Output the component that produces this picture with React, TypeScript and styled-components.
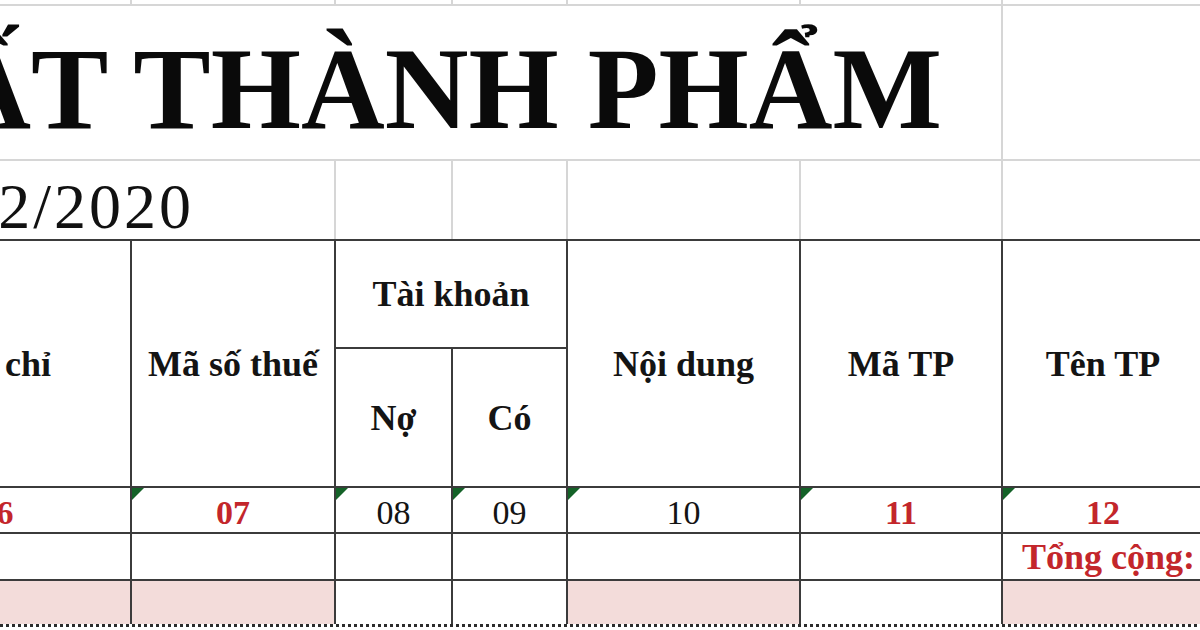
import styled, { createGlobalStyle } from "styled-components";

const GlobalStyle = createGlobalStyle`
  html, body {
    margin: 0;
    padding: 0;
    background: #fff;
  }
  body {
    font-family: "Liberation Serif", "Times New Roman", serif;
    color: #111;
  }
`;

// widths of the sheet columns A..G (A is half scrolled out of view)
const COLUMNS = "267px 202px 115px 113px 231px 200px 200px";
const RED = "#c3262b";

const Viewport = styled.div`
  width: 1200px;
  height: 630px;
  overflow: hidden;
  background: #fff;
`;

const Sheet = styled.div`
  width: 1340px;
  margin-left: -137px; /* horizontal scroll of the worksheet */
  display: flex;
  flex-direction: column;
`;

const Band = styled.div<{ $bottom?: boolean }>`
  display: grid;
  grid-template-columns: ${COLUMNS};
  column-gap: 2px;
  background: #d6d6d6;
  padding-bottom: ${(p) => (p.$bottom ? "2px" : "0")};
`;

const GridCell = styled.div<{ $h: number; $span?: number }>`
  height: ${(p) => p.$h}px;
  background: #fff;
  grid-column: ${(p) => (p.$span ? `span ${p.$span}` : "auto")};
`;

const TitleCell = styled(GridCell)`
  display: flex;
  justify-content: flex-end;
  align-items: flex-start;
  overflow: hidden;
  padding: 25px 59px 0 0;
  box-sizing: border-box;
  white-space: nowrap;
  font-size: 116px;
  font-weight: 700;
  line-height: 1;
  color: #0a0a0a;
`;

const DateCell = styled(GridCell)`
  display: flex;
  justify-content: flex-end;
  align-items: flex-start;
  overflow: hidden;
  padding: 14px 140px 0 0;
  box-sizing: border-box;
  white-space: nowrap;
  font-size: 64px;
  line-height: 1;
  letter-spacing: 3px;
  color: #111;
`;

const Table = styled.div`
  display: grid;
  grid-template-columns: ${COLUMNS};
  grid-template-rows: 106px 137px 44px 45px 43px;
  gap: 2px;
  padding-top: 2px;
  background: #3b3b3b;
  background-clip: padding-box;
  border-bottom: 3px dotted #2c2c2c;
`;

const HeadCell = styled.div<{ $rows?: number; $cols?: number }>`
  grid-row: ${(p) => (p.$rows ? `span ${p.$rows}` : "auto")};
  grid-column: ${(p) => (p.$cols ? `span ${p.$cols}` : "auto")};
  background: #fff;
  display: flex;
  align-items: center;
  justify-content: center;
  white-space: nowrap;
  overflow: hidden;
  font-size: 36px;
  font-weight: 700;
  line-height: 1;
  color: #141414;
`;

const NumCell = styled.div<{ $red?: boolean }>`
  position: relative;
  background: #fff;
  display: flex;
  align-items: flex-end;
  justify-content: center;
  padding-bottom: 2px;
  box-sizing: border-box;
  white-space: nowrap;
  font-size: 34px;
  line-height: 1;
  font-weight: ${(p) => (p.$red ? 700 : 400)};
  color: ${(p) => (p.$red ? RED : "#141414")};

  /* excel "number stored as text" marker */
  &::before {
    content: "";
    position: absolute;
    top: 0;
    left: 0;
    width: 12px;
    height: 12px;
    background: #146228;
    clip-path: polygon(0 0, 100% 0, 0 100%);
  }
`;

const BodyCell = styled.div<{ $pink?: boolean }>`
  background: ${(p) => (p.$pink ? "#f3dcda" : "#fff")};
`;

const TotalCell = styled.div`
  background: #fff;
  display: flex;
  align-items: center;
  justify-content: flex-end;
  padding-right: 8px;
  white-space: nowrap;
  font-size: 36px;
  font-weight: 700;
  line-height: 1;
  color: ${RED};
`;

const numbers = [
  { text: "06", red: true },
  { text: "07", red: true },
  { text: "08", red: false },
  { text: "09", red: false },
  { text: "10", red: false },
  { text: "11", red: true },
  { text: "12", red: true },
];

const pinkCols = [true, true, false, false, true, false, true];

function App() {
  return (
    <Viewport>
      <GlobalStyle />
      <Sheet>
        <Band $bottom>
          {pinkCols.map((_, i) => (
            <GridCell key={i} $h={4} />
          ))}
        </Band>
        <Band $bottom>
          <TitleCell $h={153} $span={6}>
            XUẤT THÀNH PHẨM
          </TitleCell>
          <GridCell $h={153} />
        </Band>
        <Band>
          <DateCell $h={78} $span={2}>
            Tháng 12/2020
          </DateCell>
          <GridCell $h={78} />
          <GridCell $h={78} />
          <GridCell $h={78} />
          <GridCell $h={78} />
          <GridCell $h={78} />
        </Band>

        <Table>
          <HeadCell $rows={2}>Địa chỉ</HeadCell>
          <HeadCell $rows={2}>Mã số thuế</HeadCell>
          <HeadCell $cols={2}>Tài khoản</HeadCell>
          <HeadCell $rows={2}>Nội dung</HeadCell>
          <HeadCell $rows={2}>Mã TP</HeadCell>
          <HeadCell $rows={2}>Tên TP</HeadCell>
          <HeadCell>Nợ</HeadCell>
          <HeadCell>Có</HeadCell>

          {numbers.map((n) => (
            <NumCell key={n.text} $red={n.red}>
              {n.text}
            </NumCell>
          ))}

          {pinkCols.slice(0, 6).map((_, i) => (
            <BodyCell key={"t" + i} />
          ))}
          <TotalCell>Tổng cộng:</TotalCell>

          {pinkCols.map((pink, i) => (
            <BodyCell key={"p" + i} $pink={pink} />
          ))}
        </Table>
      </Sheet>
    </Viewport>
  );
}

export default App;
